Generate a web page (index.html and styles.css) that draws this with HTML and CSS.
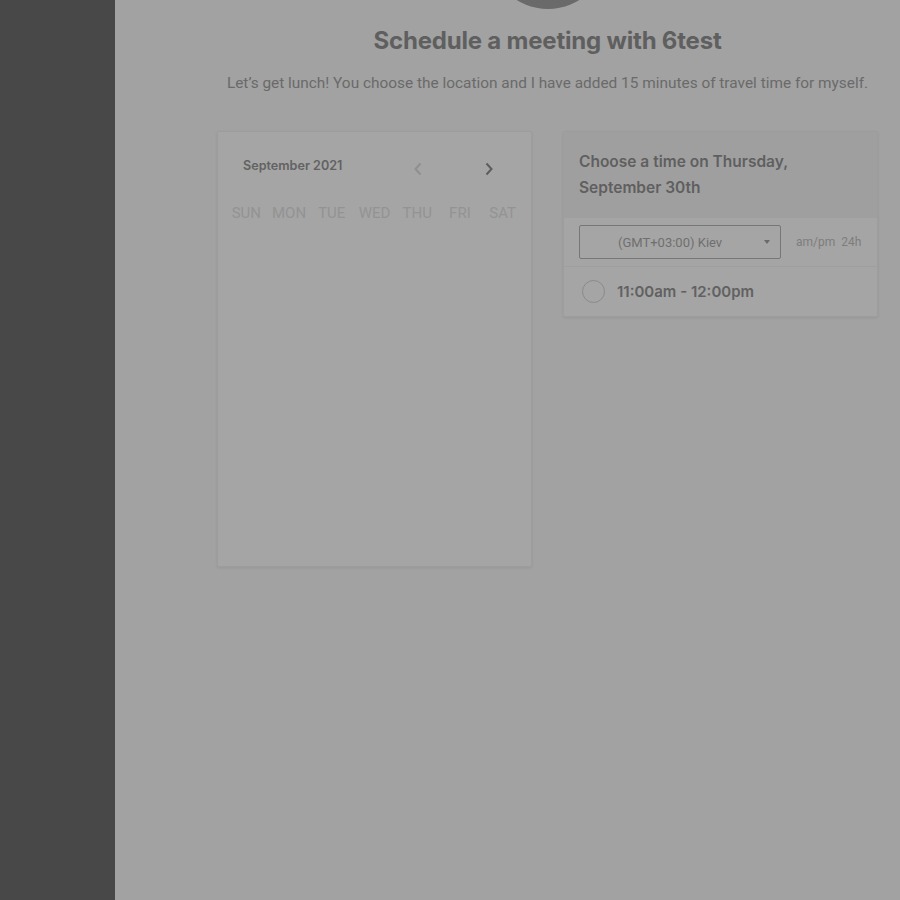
FILE: index.html
```html
<!DOCTYPE html>
<html lang="en">
<head>
<meta charset="utf-8">
<title>Schedule a meeting</title>
<link rel="stylesheet" href="styles.css">
</head>
<body>
<aside class="sidebar"></aside>
<main class="main">
  <div class="content">
    <div class="avatar"></div>
    <h1 class="title">Schedule a meeting with 6test</h1>
    <p class="subtitle">Let’s get lunch! You choose the location and I have added 15 minutes of travel time for myself.</p>
    <div class="cards">
      <section class="card calendar">
        <div class="cal-head">
          <span class="month">September 2021</span>
          <div class="nav">
            <button class="nav-btn prev" aria-label="Previous month">
              <svg width="10" height="14" viewBox="0 0 10 14"><path d="M7.5 1.5 L2.5 7 L7.5 12.5" fill="none" stroke="currentColor" stroke-width="2"/></svg>
            </button>
            <button class="nav-btn next" aria-label="Next month">
              <svg width="10" height="14" viewBox="0 0 10 14"><path d="M2.5 1.5 L7.5 7 L2.5 12.5" fill="none" stroke="currentColor" stroke-width="2"/></svg>
            </button>
          </div>
        </div>
        <div class="weekdays">
          <span>SUN</span><span>MON</span><span>TUE</span><span>WED</span><span>THU</span><span>FRI</span><span>SAT</span>
        </div>
      </section>
      <section class="card times">
        <div class="times-head">Choose a time on Thursday, September 30th</div>
        <div class="tz-row">
          <div class="select">
            <span class="select-text">(GMT+03:00) Kiev</span>
            <span class="caret"></span>
          </div>
          <span class="format">am/pm&nbsp;&nbsp;24h</span>
        </div>
        <div class="slot">
          <span class="radio"></span>
          <span class="slot-text">11:00am - 12:00pm</span>
        </div>
      </section>
    </div>
  </div>
</main>
</body>
</html>
```
FILE: styles.css
```css
html, body {
  margin: 0;
  padding: 0;
  height: 100%;
}
body {
  display: flex;
  background: #a2a2a2;
  font-family: Roboto, "Liberation Sans", sans-serif;
  overflow: hidden;
}
.sidebar {
  width: 115px;
  flex: 0 0 115px;
  height: 100vh;
  background: #484848;
}
.main {
  flex: 1;
  padding-left: 80px;
  min-height: 100vh;
}
.content {
  display: flex;
  flex-direction: column;
  align-items: center;
}
.avatar {
  width: 118px;
  height: 118px;
  border-radius: 50%;
  background: #6a6a6a;
  margin-top: -109px;
}
.title {
  margin: 17px 0 0;
  font-family: Inter, "Liberation Sans", sans-serif;
  font-weight: 700;
  font-size: 24px;
  line-height: 30px;
  color: #5f5f5f;
  letter-spacing: -0.2px;
}
.subtitle {
  margin: 16px 0 0;
  font-size: 15.4px;
  line-height: 22px;
  color: #6a6a6a;
}
.cards {
  display: flex;
  gap: 31px;
  margin-top: 37px;
  align-items: flex-start;
}
.card {
  width: 315px;
  box-sizing: border-box;
  background: #a5a5a5;
  border: 1px solid #9d9d9d;
  border-radius: 2px;
  box-shadow: 0 1px 3px rgba(0, 0, 0, 0.08);
}
.calendar {
  height: 436px;
}
.cal-head {
  display: flex;
  align-items: center;
  padding: 18px 27px 0 25px;
  height: 30px;
}
.month {
  font-family: Inter, "Liberation Sans", sans-serif;
  font-weight: 600;
  font-size: 12.6px;
  color: #626262;
}
.nav {
  margin-left: auto;
  display: flex;
  gap: 41px;
  margin-top: 8px;
}
.nav-btn {
  width: 30px;
  height: 22px;
  border: 0;
  padding: 0;
  background: transparent;
  display: flex;
  align-items: center;
  justify-content: center;
}
.prev { color: #8f8f8f; }
.next { color: #5d5d5d; }
.weekdays {
  display: grid;
  grid-template-columns: repeat(7, 1fr);
  padding: 22px 7px 0 7px;
  text-align: center;
  font-size: 15px;
  line-height: 22px;
  color: #939393;
}
.times {
  overflow: hidden;
}
.times-head {
  background: #9f9f9f;
  padding: 17px 80px 17px 15px;
  font-family: Inter, "Liberation Sans", sans-serif;
  font-weight: 600;
  font-size: 15.5px;
  line-height: 26px;
  color: #5f5f5f;
}
.tz-row {
  display: flex;
  align-items: center;
  padding: 7px 15px 7px 15px;
  border-bottom: 1px solid #9e9e9e;
}
.select {
  width: 202px;
  height: 34px;
  box-sizing: border-box;
  border: 1px solid #777777;
  border-radius: 2px;
  display: flex;
  align-items: center;
  position: relative;
}
.select-text {
  margin-left: 38px;
  font-size: 13px;
  color: #6f6f6f;
}
.caret {
  position: absolute;
  right: 10px;
  top: 14px;
  width: 0;
  height: 0;
  border-left: 3.5px solid transparent;
  border-right: 3.5px solid transparent;
  border-top: 4px solid #6a6a6a;
}
.format {
  margin-left: 15px;
  font-size: 12px;
  color: #7d7d7d;
}
.slot {
  display: flex;
  align-items: center;
  height: 49px;
  padding-left: 18px;
}
.radio {
  width: 21px;
  height: 21px;
  border: 1.5px solid #8a8a8a;
  border-radius: 50%;
}
.slot-text {
  margin-left: 12px;
  font-family: Inter, "Liberation Sans", sans-serif;
  font-weight: 600;
  font-size: 15px;
  color: #616161;
}
```
